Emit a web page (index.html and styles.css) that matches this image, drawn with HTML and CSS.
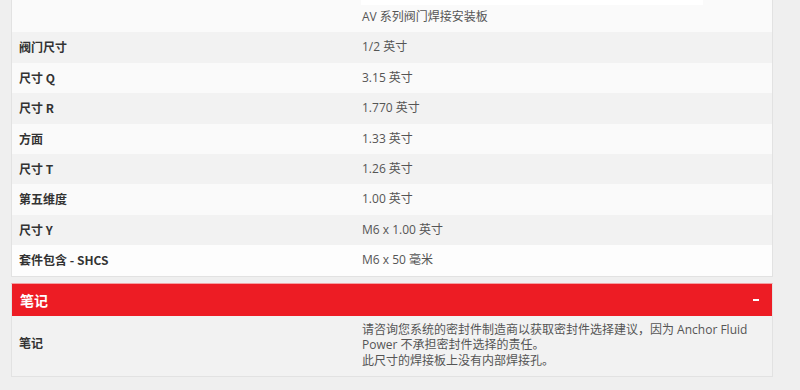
FILE: index.html
```html
<!DOCTYPE html>
<html lang="zh">
<head>
<meta charset="utf-8">
<title>规格</title>
<link rel="stylesheet" href="styles.css">
</head>
<body>
<div class="page">
  <div class="card specs">
    <div class="row first odd">
      <div class="label"></div>
      <div class="value"><div class="thumb"></div>AV 系列阀门焊接安装板</div>
    </div>
    <div class="row even"><div class="label">阀门尺寸</div><div class="value">1/2 英寸</div></div>
    <div class="row odd"><div class="label">尺寸 Q</div><div class="value">3.15 英寸</div></div>
    <div class="row even"><div class="label">尺寸 R</div><div class="value">1.770 英寸</div></div>
    <div class="row odd"><div class="label">方面</div><div class="value">1.33 英寸</div></div>
    <div class="row even"><div class="label">尺寸 T</div><div class="value">1.26 英寸</div></div>
    <div class="row odd"><div class="label">第五维度</div><div class="value">1.00 英寸</div></div>
    <div class="row even"><div class="label">尺寸 Y</div><div class="value">M6 x 1.00 英寸</div></div>
    <div class="row odd last"><div class="label">套件包含 - SHCS</div><div class="value">M6 x 50 毫米</div></div>
  </div>
  <div class="card notes">
    <div class="header"><span class="title">笔记</span><span class="toggle"></span></div>
    <div class="row even notes-row">
      <div class="label">笔记</div>
      <div class="value">请咨询您系统的密封件制造商以获取密封件选择建议，因为 Anchor Fluid Power 不承担密封件选择的责任。<br>此尺寸的焊接板上没有内部焊接孔。</div>
    </div>
  </div>
</div>
</body>
</html>
```
FILE: styles.css
```css
html, body {
  margin: 0;
  padding: 0;
  background: #efefef;
}
body {
  font-family: "Open Sans", "Noto Sans CJK SC", sans-serif;
  font-size: 12px;
  line-height: 1.2;
  color: #555;
}
.page {
  width: 762px;
  margin-left: 11px;
  display: flex;
  flex-direction: column;
  gap: 6px;
}
.card {
  border: 1px solid #e2e2e2;
  border-top: none;
  background: #fafafa;
}
.row {
  display: grid;
  grid-template-columns: 342px 1fr;
  align-items: center;
}
.row .label,
.row .value {
  padding: 8px 7px;
}
.row .value {
  padding-left: 8px;
}
.label {
  font-family: "Noto Sans CJK SC", "Open Sans", sans-serif;
  font-weight: 700;
  color: #333;
}
.odd { background: #fafafa; }
.even { background: #f2f2f2; }
.last { background: #fdfdfd; }
.first .value {
  padding-top: 0;
}
.thumb {
  width: 342px;
  height: 5px;
  background: #ffffff;
  margin-left: -1px;
  margin-bottom: 5px;
}
.notes {
  border-top: 1px solid #f3a0a3;
}
.header {
  background: #ed1c24;
  color: #fff;
  display: flex;
  justify-content: space-between;
  align-items: center;
  padding: 7px 8px;
  font-family: "Noto Sans CJK SC", sans-serif;
  font-weight: 700;
  font-size: 14px;
  line-height: 18px;
}
.toggle {
  width: 6px;
  height: 2px;
  background: #fff;
  margin-right: 5px;
}
.notes-row .label {
  padding-bottom: 14px;
}
.notes-row .value {
  padding-top: 6px;
  line-height: 15.5px;
}
```
